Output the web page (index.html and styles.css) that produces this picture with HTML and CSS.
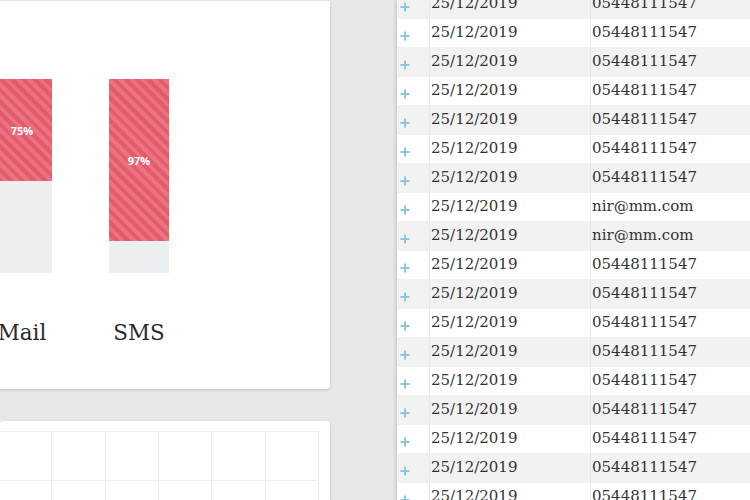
FILE: index.html
```html
<!DOCTYPE html>
<html>
<head>
<meta charset="utf-8">
<link rel="stylesheet" href="styles.css">
</head>
<body>
<div class="layout">
  <div class="left">
    <div class="card chart-card">
      <div class="bars">
        <div class="bar-col">
          <div class="bar"><div class="fill" style="height:102px"><span>75%</span></div></div>
          <div class="label">Mail</div>
        </div>
        <div class="bar-col">
          <div class="bar"><div class="fill" style="height:162px"><span>97%</span></div></div>
          <div class="label">SMS</div>
        </div>
      </div>
    </div>
    <div class="card grid-card">
      <div class="grid">
        <div class="cell"></div><div class="cell"></div><div class="cell"></div><div class="cell"></div><div class="cell"></div><div class="cell"></div>
        <div class="cell"></div><div class="cell"></div><div class="cell"></div><div class="cell"></div><div class="cell"></div><div class="cell"></div>
      </div>
    </div>
  </div>
  <div class="right">
    <div class="table" id="table"></div>
  </div>
</div>
<script>
  var rows = ["05448111547","05448111547","05448111547","05448111547","05448111547","05448111547","05448111547","nir@mm.com","nir@mm.com","05448111547","05448111547","05448111547","05448111547","05448111547","05448111547","05448111547","05448111547","05448111547"];
  var t = document.getElementById('table');
  var plus = '<svg width="10" height="10" viewBox="0 0 10 10"><path d="M5 0.5V9.5M0.5 5H9.5" stroke="#8cc6e2" stroke-width="2"/></svg>';
  rows.forEach(function(v, i){
    var r = document.createElement('div');
    r.className = 'row' + (i % 2 === 0 ? ' odd' : '');
    r.innerHTML = '<div class="c-plus">' + plus + '</div><div class="c-date">25/12/2019</div><div class="c-val">' + v + '</div>';
    t.appendChild(r);
  });
</script>
</body>
</html>
```

FILE: styles.css
```css
html, body {
  margin: 0;
  padding: 0;
}
body {
  background: #e8e8e8;
  width: 750px;
  height: 500px;
  overflow: hidden;
  font-family: "DejaVu Serif", serif;
}
.layout {
  display: flex;
  height: 500px;
}
.left {
  width: 330px;
  flex: none;
  display: flex;
  flex-direction: column;
  gap: 32px;
}
.card {
  background: #fff;
  box-shadow: 0 1px 3px rgba(0,0,0,0.18);
}
.chart-card {
  margin-top: 1px;
  height: 388px;
  border-radius: 0 0 3px 0;
  overflow: hidden;
}
.bars {
  display: flex;
  gap: 57px;
  margin-left: -8px;
  padding-top: 78px;
}
.bar-col {
  width: 60px;
  display: flex;
  flex-direction: column;
  align-items: center;
}
.bar {
  width: 60px;
  height: 194px;
  background: #eceff1;
}
.fill {
  width: 100%;
  display: flex;
  align-items: center;
  justify-content: center;
  background-color: #e55b6b;
  background-image: repeating-linear-gradient(45deg, rgba(255,255,255,0.15) 0 4px, transparent 4px 8px);
}
.fill span {
  font-family: "Open Sans", sans-serif;
  font-weight: 700;
  font-size: 11px;
  color: #fff;
}
.label {
  margin-top: 47px;
  font-size: 21.5px;
  color: #2c2c2c;
  white-space: nowrap;
}
.grid-card {
  flex: 1;
  border-radius: 3px 3px 0 0;
  padding: 10px 11px 0 0;
  overflow: hidden;
}
.grid {
  margin-left: -2px;
  display: grid;
  grid-template-columns: repeat(6, 1fr);
  border-right: 1px solid #eeeeee;
}
.cell {
  height: 48px;
  border-top: 1px solid #eeeeee;
  border-left: 1px solid #eeeeee;
}
.right {
  flex: 1;
  margin-left: 67px;
  background: #fff;
  box-shadow: -2px 0 3px rgba(0,0,0,0.12);
  overflow: hidden;
}
.table {
  margin-top: -11px;
}
.row {
  display: flex;
  height: 29px;
  box-sizing: border-box;
  border-top: 1px solid #f1f1f1;
  color: #333;
  font-size: 15px;
}
.row.odd {
  background: #f2f2f2;
}
.c-plus {
  width: 32px;
  flex: none;
  display: flex;
  align-items: center;
  padding: 6px 0 0 3px;
  box-sizing: border-box;
}
.c-date {
  width: 161px;
  flex: none;
  border-left: 1px solid #e8e8e8;
  padding-left: 1px;
  box-sizing: border-box;
  line-height: 26px;
}
.c-val {
  flex: 1;
  border-left: 1px solid #e8e8e8;
  padding-left: 1px;
  line-height: 26px;
}
```
